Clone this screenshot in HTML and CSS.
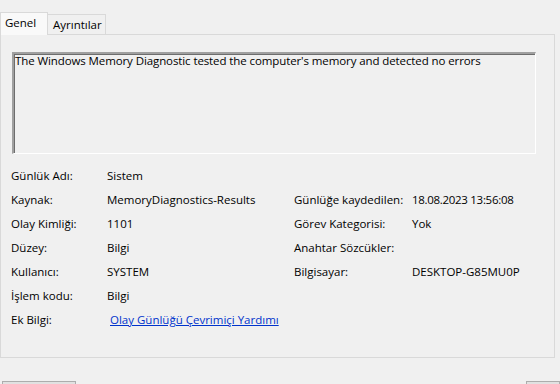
FILE: index.html
```html
<!DOCTYPE html>
<html lang="tr">
<head>
<meta charset="utf-8">
<link rel="stylesheet" href="styles.css">
</head>
<body>
<div class="tabs">
  <div class="tab active">Genel</div>
  <div class="tab">Ayrıntılar</div>
</div>
<div class="page">
  <div class="desc">The Windows Memory Diagnostic tested the computer's memory and detected no errors</div>
  <div class="grid">
    <div class="lbl">Günlük Adı:</div><div class="val">Sistem</div><div></div><div></div>
    <div class="lbl">Kaynak:</div><div class="val">MemoryDiagnostics-Results</div><div class="lbl">Günlüğe kaydedilen:</div><div class="val num">18.08.2023 13:56:08</div>
    <div class="lbl">Olay Kimliği:</div><div class="val">1101</div><div class="lbl">Görev Kategorisi:</div><div class="val">Yok</div>
    <div class="lbl">Düzey:</div><div class="val">Bilgi</div><div class="lbl">Anahtar Sözcükler:</div><div class="val"></div>
    <div class="lbl">Kullanıcı:</div><div class="val">SYSTEM</div><div class="lbl">Bilgisayar:</div><div class="val">DESKTOP-G85MU0P</div>
    <div class="lbl">İşlem kodu:</div><div class="val">Bilgi</div><div></div><div></div>
    <div class="lbl">Ek Bilgi:</div><div class="val"><a class="link" href="#">Olay Günlüğü Çevrimiçi Yardımı</a></div><div></div><div></div>
  </div>
</div>
<div class="buttons">
  <div class="btn left"></div>
  <div class="btn right"></div>
</div>
</body>
</html>
```
FILE: styles.css
```css
html, body {
  margin: 0;
  padding: 0;
  background: #f0f0f0;
  width: 560px;
  height: 384px;
  overflow: hidden;
  font-family: "Open Sans", "Noto Sans", sans-serif;
  font-size: 11.5px;
  color: #000;
}
.tabs {
  display: flex;
  align-items: flex-end;
  padding-top: 12px;
  height: 22px;
  position: relative;
  z-index: 2;
}
.tab {
  box-sizing: border-box;
  height: 20px;
  width: 58px;
  border: 1px solid #d9d9d9;
  border-bottom: none;
  border-left: none;
  background: #f0f0f0;
  padding-left: 5px;
  line-height: 19px;
}
.tab.active {
  width: 48px;
  border-left: 1px solid #d9d9d9;
  background: #f9f9f9;
  margin-bottom: -1px;
  height: 23px;
  padding-left: 4px;
  line-height: 19px;
}
.page {
  box-sizing: border-box;
  width: 555px;
  height: 324px;
  border: 1px solid #d9d9d9;
  background: #f0f0f0;
  padding-top: 17px;
  padding-left: 11px;
}
.desc {
  box-sizing: border-box;
  width: 524px;
  height: 102px;
  border-top: 2px solid #a0a0a0;
  border-left: 2px solid #a0a0a0;
  border-right: 1px solid #ffffff;
  border-bottom: 1px solid #ffffff;
  box-shadow: inset 1px 1px 0 #6d6d6d;
  padding: 0 0 0 1px;
  line-height: 14px;
  letter-spacing: -0.1px;
  background: #f0f0f0;
}
.grid {
  display: grid;
  grid-template-columns: 96px 187px 118px 1fr;
  grid-auto-rows: 24px;
  margin-top: 10px;
  margin-left: -1px;
  line-height: 24px;
}
.num {
  letter-spacing: -0.3px;
}
.link {
  color: #0033cc;
  text-decoration: underline;
  padding-left: 3px;
}
.buttons {
  display: flex;
  justify-content: space-between;
  padding-top: 23px;
}
.btn {
  box-sizing: border-box;
  height: 12px;
  border: 1px solid #adadad;
  background: #e1e1e1;
}
.btn.left {
  margin-left: 2px;
  width: 74px;
}
.btn.right {
  width: 34px;
}
```
